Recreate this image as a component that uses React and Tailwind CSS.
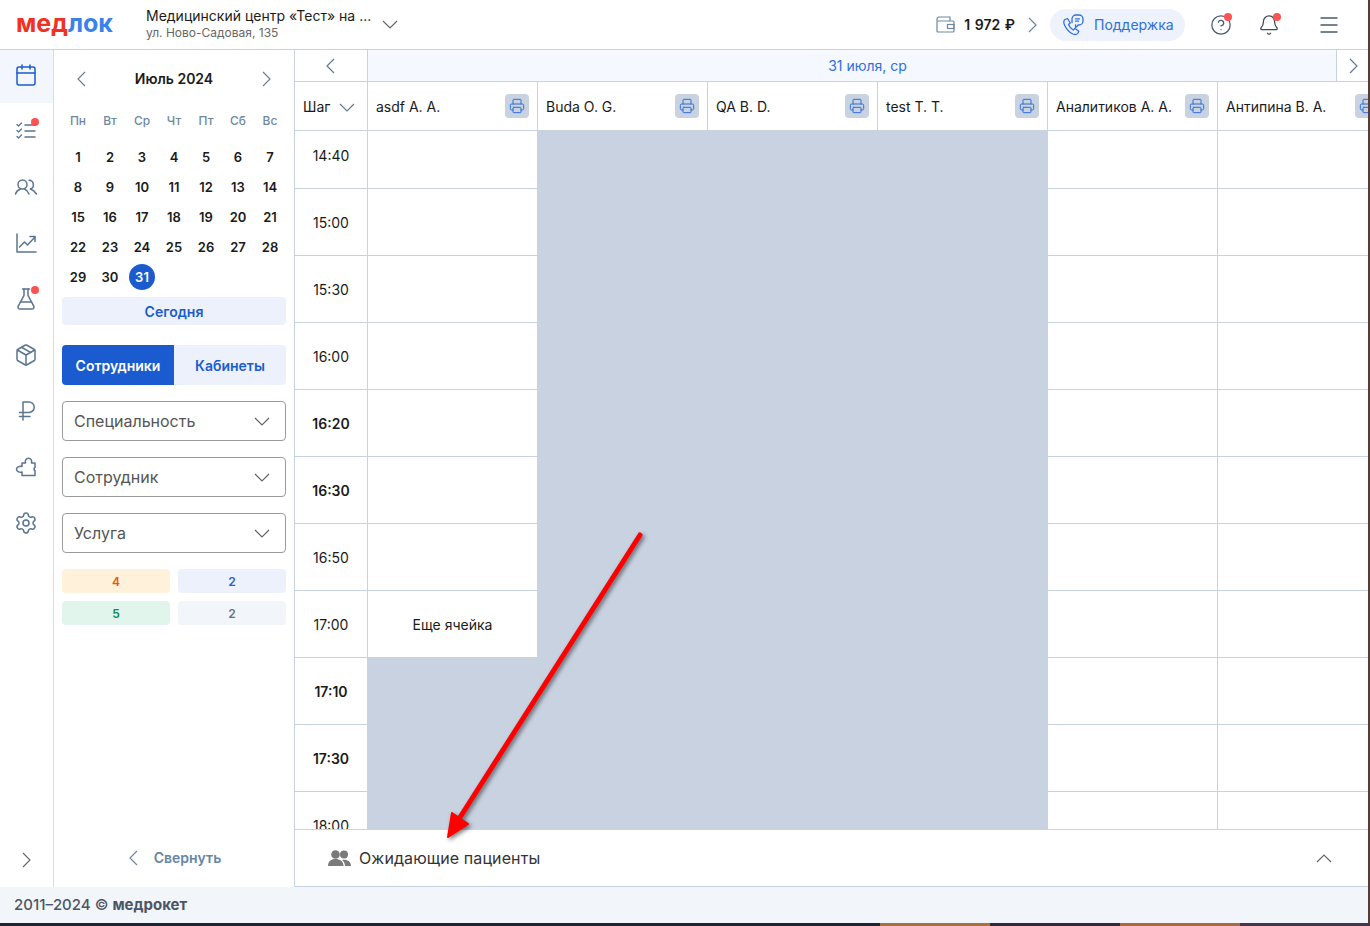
import {
  Bell,
  Calendar,
  CircleHelp,
  FlaskConical,
  Menu,
  Package,
  Printer,
  Settings,
} from "lucide-react";

const days = ["Пн", "Вт", "Ср", "Чт", "Пт", "Сб", "Вс"];
const dates = Array.from({ length: 31 }, (_, i) => i + 1);

const doctors = ["asdf А. А.", "Buda O. G.", "QA B. D.", "test T. T.", "Аналитиков А. А.", "Антипина В. А."];

// closedFrom: index of the first closed row in a column, 0 = closed all the way
const closedFrom = [8, 0, 0, 0, 99, 99];

const times = [
  { t: "14:40" },
  { t: "15:00" },
  { t: "15:30" },
  { t: "16:00" },
  { t: "16:20", bold: true },
  { t: "16:30", bold: true },
  { t: "16:50" },
  { t: "17:00" },
  { t: "17:10", bold: true },
  { t: "17:30", bold: true },
  { t: "18:00" },
];

const Chevron = ({ dir = "down", className = "" }) => {
  const points = {
    down: "1,1 8,8 15,1",
    up: "1,8 8,1 15,8",
  };
  if (dir === "left" || dir === "right") {
    return (
      <svg width="9" height="16" viewBox="0 0 9 16" fill="none" stroke="currentColor" strokeWidth="1.2" className={className}>
        <polyline points={dir === "left" ? "8,1 1,8 8,15" : "1,1 8,8 1,15"} />
      </svg>
    );
  }
  return (
    <svg width="16" height="9" viewBox="0 0 16 9" fill="none" stroke="currentColor" strokeWidth="1.2" className={className}>
      <polyline points={points[dir]} />
    </svg>
  );
};

const Dot = ({ className = "" }) => (
  <span className={`absolute w-2 h-2 rounded-full bg-[#fb5252] ${className}`}></span>
);

const Icon = ({ children }) => (
  <svg width="24" height="24" viewBox="0 0 24 24" fill="none" stroke="currentColor" strokeWidth="1.5" strokeLinecap="round" strokeLinejoin="round">
    {children}
  </svg>
);

const ChecksIcon = () => (
  <Icon>
    <path d="M3 5.500l1.500 1.500 3-3M3 11.500l1.500 1.500 3-3M3 17.500l1.500 1.500 3-3" strokeWidth="1.300" />
    <path d="M11 6h10M11 12h10M11 18h10" />
  </Icon>
);

const PeopleIcon = () => (
  <Icon>
    <circle cx="8.500" cy="9.500" r="4.500" />
    <path d="M15 5.300a4.500 4.500 0 0 1 1.500 8.700" />
    <path d="M1.500 19c.8-2.500 2.700-4.200 5-5M10.500 14c2 .8 3.700 2.500 4.500 5M16.500 14c2.200.8 4.300 2.500 6 5" />
  </Icon>
);

const ChartIcon = () => (
  <Icon>
    <path d="M3 3v18h19" />
    <path d="M5.500 16l5-5 3 3 7.500-8" />
    <path d="M16 5.500h5v5" />
  </Icon>
);

const RubleIcon = () => (
  <Icon>
    <path d="M9 21V3h6a5.200 5.200 0 0 1 0 10.400H5.500M5.500 17.500H16" />
  </Icon>
);

const PuzzleIcon = () => (
  <Icon>
    <path d="M8 8h3.500c-.8-2.800.8-4.800 3-4.800s3.800 2 3 4.800H21v4.500c-1.300 0-1.300 3 0 3v5H8v-3.500c-3 .8-5.500-1-5.500-2.800s2.500-3.500 5.500-2.800z" />
  </Icon>
);

const WalletIcon = () => (
  <svg width="19" height="17" viewBox="0 0 19 17" fill="none" stroke="#6f87a3" strokeWidth="1.200">
    <path d="M1 5V3a2 2 0 0 1 2-2h11v4" />
    <rect x="1" y="5" width="17" height="11" rx="1" />
    <rect x="11.500" y="8.500" width="6.500" height="4" />
  </svg>
);

const PatientsIcon = () => (
  <svg width="23" height="16" viewBox="0 0 23 16" fill="#7a7a7a">
    <circle cx="16" cy="4.500" r="4" />
    <path d="M14 10c4.500-1 9 1 9 6h-6c0-2.500-1-4.500-3-6z" />
    <circle cx="7.500" cy="4.500" r="4.300" />
    <path d="M0 16c0-4.500 3-7 7.500-7s8 2.500 8 7z" />
  </svg>
);

const SupportIcon = () => (
  <svg width="22" height="22" viewBox="0 0 22 22" fill="none" stroke="#2f6fde" strokeWidth="1.300" strokeLinecap="round" strokeLinejoin="round">
    <path d="M5.500 4.500 3 5.500C1.500 6.500 1.500 9 3 12c1.800 3.500 4.500 6.500 8 8 2 .8 4 .5 5-1l.8-1.800-3.800-2.700-1.800 1.500c-2-1-3.800-3.200-4.700-5.500l1.800-1.500z" />
    <path d="M10 8.500V5a4 4 0 0 1 4-4h3a4 4 0 0 1 4 4v2a4 4 0 0 1-4 4h-1c-.6 1.200-1.400 2-2.500 2.500.2-.8.200-1.500 0-2.500" />
    <path d="M13.500 4.800h4M13.500 7.200h3" />
  </svg>
);

const sideItems = [
  { icon: <ChecksIcon />, dot: true },
  { icon: <PeopleIcon /> },
  { icon: <ChartIcon /> },
  { icon: <FlaskConical size={24} strokeWidth={1.5} />, dot: true },
  { icon: <Package size={24} strokeWidth={1.5} /> },
  { icon: <RubleIcon /> },
  { icon: <PuzzleIcon /> },
  { icon: <Settings size={24} strokeWidth={1.5} /> },
];

const Select = ({ label }) => (
  <div className="h-10 flex items-center justify-between pl-[11px] pr-[15px] border border-[#9a9a9a] rounded text-base text-[#555]">
    <span>{label}</span>
    <Chevron className="text-[#666]" />
  </div>
);

const Header = () => (
  <header className="h-[50px] shrink-0 flex items-center border-b border-[#c8d2e1] bg-white">
    <div className="w-[146px] pl-[16px] text-[25px] leading-none font-bold -mt-[2px]">
      <span className="text-[#f0321e]">мед</span>
      <span className="text-[#3b82e8]">лок</span>
    </div>
    <div className="w-[236px] -mt-[1px]">
      <div className="text-sm leading-[18px] text-[#1a1a1a] whitespace-nowrap">Медицинский центр «Тест» на ...</div>
      <div className="text-xs leading-[16px] text-[#666]">ул. Ново-Садовая, 135</div>
    </div>
    <Chevron className="text-[#666]" />
    <div className="ml-auto flex items-center">
      <WalletIcon />
      <span className="ml-[9px] text-sm font-semibold text-[#1a1a1a] [word-spacing:1px]">1 972 ₽</span>
      <Chevron dir="right" className="ml-[13px] text-[#6f87a3]" />
      <div className="ml-[13px] w-[135px] h-8 flex items-center pl-[12px] rounded-full bg-[#edf2fc]">
        <SupportIcon />
        <span className="ml-[10px] text-sm text-[#2f6fde]">Поддержка</span>
      </div>
      <div className="relative ml-[25px] text-[#4a5a6a]">
        <CircleHelp size={22} strokeWidth={1.4} />
        <Dot className="-top-[1px] right-0" />
      </div>
      <div className="relative ml-[26px] text-[#3f4a55]">
        <Bell size={22} strokeWidth={1.4} />
        <Dot className="-top-[1px] -right-[1px]" />
      </div>
      <Menu size={24} strokeWidth={1.4} className="ml-[37px] mr-[27px] text-[#4a5a6a]" />
    </div>
  </header>
);

const Sidebar = () => (
  <aside className="w-[54px] shrink-0 flex flex-col border-r border-[#d5dce8] text-[#5b7490]">
    <div className="h-[53px] flex items-center justify-center pb-[3px] pr-[1px] bg-[#f3f6fd] text-[#1a5ccf]">
      <Calendar size={24} strokeWidth={1.5} />
    </div>
    {sideItems.map((item, i) => (
      <div key={i} className="h-14 flex items-center justify-center pr-[1px]">
        <span className="relative">
          {item.icon}
          {item.dot && <Dot className="-top-[1px] -right-[1px]" />}
        </span>
      </div>
    ))}
    <div className="mt-auto h-[54px] flex items-center justify-center text-[#6a6a6a]">
      <Chevron dir="right" />
    </div>
  </aside>
);

const CalendarPanel = () => (
  <section className="w-[241px] shrink-0 flex flex-col px-2 border-r border-[#c8d2e1]">
    <div className="h-[58px] flex items-center justify-between px-[15px] text-[#6f7f90]">
      <Chevron dir="left" />
      <span className="text-sm font-semibold text-[#1a1a1a]">Июль 2024</span>
      <Chevron dir="right" />
    </div>
    <div className="grid grid-cols-7 h-[24px] items-center text-center text-xs font-medium text-[#6f87a3] mt-[1px]">
      {days.map((d) => (
        <span key={d}>{d}</span>
      ))}
    </div>
    <div className="grid grid-cols-7 auto-rows-[30px] mt-[9px] text-center text-[13px] font-semibold text-[#1a1a1a]">
      {dates.map((d) =>
        d === 31 ? (
          <div key={d} className="flex items-center justify-center">
            <span className="w-[26px] h-[26px] flex items-center justify-center pt-[2px] rounded-full bg-[#1a5ccf] text-white">{d}</span>
          </div>
        ) : (
          <div key={d} className="flex items-center justify-center pt-[2px]">
            {d}
          </div>
        )
      )}
    </div>
    <div className="h-7 mt-[5px] flex items-center justify-center pt-[2px] rounded bg-[#edf1fb] text-sm font-semibold text-[#1a5ccf]">Сегодня</div>
    <div className="h-10 mt-5 grid grid-cols-2 rounded overflow-hidden text-sm font-semibold">
      <div className="flex items-center justify-center pt-[2px] bg-[#1a5ccf] text-white">Сотрудники</div>
      <div className="flex items-center justify-center pt-[2px] bg-[#edf1fb] text-[#1a5ccf]">Кабинеты</div>
    </div>
    <div className="mt-4 flex flex-col gap-4">
      <Select label="Специальность" />
      <Select label="Сотрудник" />
      <Select label="Услуга" />
    </div>
    <div className="mt-4 grid grid-cols-2 gap-x-2 gap-y-2 text-xs font-semibold text-center">
      <div className="h-6 flex items-center justify-center pt-[2px] rounded bg-[#fff1da] text-[#e8590c]">4</div>
      <div className="h-6 flex items-center justify-center pt-[2px] rounded bg-[#edf1fb] text-[#2a5fcc]">2</div>
      <div className="h-6 flex items-center justify-center pt-[2px] rounded bg-[#e1f5ec] text-[#12875b]">5</div>
      <div className="h-6 flex items-center justify-center pt-[2px] rounded bg-[#f2f5fa] text-[#64748b]">2</div>
    </div>
    <div className="mt-auto h-[58px] flex items-center justify-center pl-[2px] text-sm font-semibold text-[#6585a8]">
      <Chevron dir="left" className="mr-[16px] text-[#6f87a3]" />
      Свернуть
    </div>
  </section>
);

const Schedule = () => (
  <main className="flex-1 min-w-0 flex flex-col overflow-hidden">
    <div className="h-[32px] shrink-0 flex border-b border-[#c8d2e1]">
      <div className="w-[73px] shrink-0 flex items-center justify-center pr-[1px] border-r border-[#c8d2e1] text-[#5f7b9a]">
        <Chevron dir="left" />
      </div>
      <div className="flex-1 flex items-center justify-center pl-[31px] bg-[#f5f8ff] text-sm text-[#2f6fde]">31 июля, ср</div>
      <div className="w-[32px] shrink-0 flex items-center justify-center pl-[1px] border-l border-[#c8d2e1] text-[#5f7b9a]">
        <Chevron dir="right" />
      </div>
    </div>

    <div className="h-[49px] shrink-0 flex border-b border-[#c8d2e1]">
      <div className="w-[73px] shrink-0 flex items-center pl-2 border-r border-[#c8d2e1] text-sm text-[#1a1a1a]">
        <span className="mt-[2px]">Шаг</span>
        <Chevron className="ml-[9px] mt-[2px] text-[#5f7b9a]" />
      </div>
      {doctors.map((name) => (
        <div key={name} className="w-[170px] shrink-0 flex items-center justify-between pl-2 pr-2 border-r border-[#c8d2e1] text-sm text-[#1a1a1a]">
          <span className="mt-[2px] whitespace-nowrap">{name}</span>
          <span className="w-6 h-6 flex items-center justify-center rounded bg-[#c8d2e1] text-[#2f6fde]">
            <Printer size={16} strokeWidth={1.5} />
          </span>
        </div>
      ))}
    </div>

    <div className="flex-1 min-h-0 overflow-hidden">
      <div className="-mt-[9px]">
        {times.map((row, r) => (
          <div key={row.t} className="flex h-[67px]">
            <div
              className={`w-[73px] shrink-0 flex items-center justify-center pt-[2px] border-r border-b border-[#c8d2e1] text-sm text-[#1a1a1a] ${
                row.bold ? "font-semibold" : ""
              }`}
            >
              {row.t}
            </div>
            {doctors.map((name, c) => (
              <div
                key={name}
                className={`w-[170px] shrink-0 flex items-center justify-center pt-[2px] border-r border-b border-[#c8d2e1] text-sm text-[#1a1a1a] ${
                  r >= closedFrom[c] ? "bg-[#c8d2e1]" : "bg-white"
                }`}
              >
                {c === 0 && row.t === "17:00" ? "Еще ячейка" : ""}
              </div>
            ))}
          </div>
        ))}
      </div>
    </div>

    <div className="h-[58px] shrink-0 flex items-center pl-[33px] pr-[36px] border-y border-[#c8d2e1] bg-white">
      <PatientsIcon />
      <span className="ml-2 text-base tracking-[0.1px] text-[#333]">Ожидающие пациенты</span>
      <Chevron dir="up" className="ml-auto text-[#666]" />
    </div>
  </main>
);

// red annotation arrow drawn over the screenshot
const Arrow = () => (
  <svg className="absolute left-0 top-0 pointer-events-none drop-shadow-[2px_2px_2px_rgba(0,0,0,0.5)]" width="1370" height="926">
    <line x1="640" y1="535" x2="457" y2="822" stroke="#ff0000" strokeWidth="5" strokeLinecap="round" />
    <polygon points="448,837 452,813 468,824" fill="#ff0000" stroke="#ff0000" strokeWidth="2" strokeLinejoin="round" />
  </svg>
);

export default function App() {
  return (
    <div className="relative w-[1370px] h-[926px] flex flex-col overflow-hidden bg-[#1f2a3c] font-['Inter','Noto_Sans',sans-serif]">
      <div className="h-[923px] flex">
        <div className="w-[1368px] flex flex-col bg-white overflow-hidden">
          <Header />
          <div className="flex-1 min-h-0 flex">
            <Sidebar />
            <CalendarPanel />
            <Schedule />
          </div>
          <footer className="h-[36px] shrink-0 flex items-center pl-[14px] bg-[#f2f5fa] text-[15px] font-medium text-[#4b5563]">
            2011–2024 © <span className="ml-1 font-bold">медрокет</span>
          </footer>
        </div>
        <div className="w-[2px] bg-[#5a3a34]"></div>
      </div>
      <div className="h-[3px] flex">
        <div className="w-[880px] bg-[#1c2438]"></div>
        <div className="w-[110px] bg-[#a8703a]"></div>
        <div className="w-[130px] bg-[#33283c]"></div>
        <div className="w-[120px] bg-[#a8693f]"></div>
        <div className="flex-1 bg-[#46344c]"></div>
      </div>
      <Arrow />
    </div>
  );
}
